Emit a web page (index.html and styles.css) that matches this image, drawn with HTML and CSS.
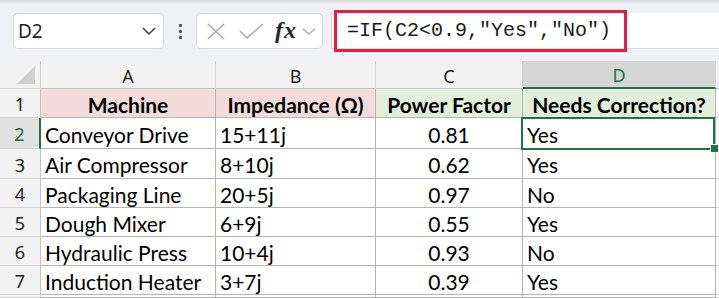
FILE: index.html
```html
<!DOCTYPE html>
<html lang="en">

<head>
     <meta charset="UTF-8">
     <meta name="viewport" content="width=device-width, initial-scale=1.0">
     <title>Power factor check</title>
     <link rel="stylesheet" href="styles.css">
</head>

<body>

     <div id="wrapper">
          <!-- Formula toolbar -->
          <div class="toolbar">
               <div class="name-box">
                    <span class="name-text">D2</span>
                    <svg class="chevron" width="14" height="8" viewBox="0 0 14 8">
                         <polyline points="1,1 7,7 13,1" fill="none" stroke="#333" stroke-width="1.4" />
                    </svg>
               </div>
               <div class="dots">
                    <span></span><span></span><span></span>
               </div>
               <div class="func-box">
                    <svg width="18" height="17" viewBox="0 0 18 17">
                         <line x1="1" y1="1" x2="17" y2="16" stroke="#a6a6a6" stroke-width="1.4" />
                         <line x1="17" y1="1" x2="1" y2="16" stroke="#a6a6a6" stroke-width="1.4" />
                    </svg>
                    <svg width="25" height="16" viewBox="0 0 25 16">
                         <polyline points="1,8 8,15 24,1" fill="none" stroke="#a6a6a6" stroke-width="1.4" />
                    </svg>
                    <span class="fx">fx</span>
                    <svg width="14" height="7" viewBox="0 0 14 7">
                         <polyline points="1,1 7,6 13,1" fill="none" stroke="#a6a6a6" stroke-width="1.3" />
                    </svg>
               </div>
               <div class="formula-bar">
                    <span class="formula-text">=IF(C2&lt;0.9,"Yes","No")</span>
                    <div class="highlight"></div>
               </div>
          </div>

          <!-- Sheet -->
          <div class="sheet">
               <div class="corner"><div class="corner-tri"></div></div>
               <div class="col-head">A</div>
               <div class="col-head">B</div>
               <div class="col-head">C</div>
               <div class="col-head col-active">D</div>
               <div class="col-head col-rest"></div>

               <div class="row-head">1</div>
               <div class="cell head pink">Machine</div>
               <div class="cell head pink">Impedance (Ω)</div>
               <div class="cell head green">Power Factor</div>
               <div class="cell head green">Needs Correction?</div>
               <div class="cell rest"></div>

               <div class="row-head row-active">2</div>
               <div class="cell">Conveyor Drive</div>
               <div class="cell">15+11j</div>
               <div class="cell num">0.81</div>
               <div class="cell selected">Yes</div>
               <div class="cell rest"></div>

               <div class="row-head">3</div>
               <div class="cell">Air Compressor</div>
               <div class="cell">8+10j</div>
               <div class="cell num">0.62</div>
               <div class="cell">Yes</div>
               <div class="cell rest"></div>

               <div class="row-head">4</div>
               <div class="cell">Packaging Line</div>
               <div class="cell">20+5j</div>
               <div class="cell num">0.97</div>
               <div class="cell">No</div>
               <div class="cell rest"></div>

               <div class="row-head">5</div>
               <div class="cell">Dough Mixer</div>
               <div class="cell">6+9j</div>
               <div class="cell num">0.55</div>
               <div class="cell">Yes</div>
               <div class="cell rest"></div>

               <div class="row-head">6</div>
               <div class="cell">Hydraulic Press</div>
               <div class="cell">10+4j</div>
               <div class="cell num">0.93</div>
               <div class="cell">No</div>
               <div class="cell rest"></div>

               <div class="row-head">7</div>
               <div class="cell">Induction Heater</div>
               <div class="cell">3+7j</div>
               <div class="cell num">0.39</div>
               <div class="cell">Yes</div>
               <div class="cell rest"></div>

               <div class="row-head row-last"></div>
               <div class="cell"></div>
               <div class="cell"></div>
               <div class="cell"></div>
               <div class="cell"></div>
               <div class="cell rest"></div>
          </div>
     </div>

</body>

</html>
```

FILE: styles.css
```css
* {
     padding: 0;
     margin: 0;
     box-sizing: border-box;
}

html,
body {
     width: 100%;
     height: 100%;
     overflow: hidden;
     background: #ffffff;
}

#wrapper {
     width: 719px;
     height: 298px;
     overflow: hidden;
}

/* ---------- toolbar ---------- */

.toolbar {
     height: 61px;
     display: flex;
     align-items: flex-start;
     padding: 13px 0 0 13px;
     background: linear-gradient(#d6d8db 0, #e6e8eb 3px, #eff1f4 4px);
     font-family: 'Noto Sans', 'Open Sans', sans-serif;
}

.name-box {
     width: 151px;
     height: 36px;
     display: flex;
     align-items: center;
     justify-content: space-between;
     padding: 0 7px 0 4px;
     background: #ffffff;
     border: 1px solid #d4d6d9;
     border-radius: 5px;
}

.name-text {
     font-size: 19px;
     color: #1f1f1f;
}

.dots {
     width: 32px;
     height: 36px;
     display: flex;
     flex-direction: column;
     align-items: center;
     justify-content: center;
     gap: 3px;
}

.dots span {
     width: 3px;
     height: 3px;
     background: #505050;
     border-radius: 1px;
}

.func-box {
     width: 127px;
     height: 36px;
     display: flex;
     align-items: center;
     padding-left: 10px;
     background: #ffffff;
     border: 1px solid #d4d6d9;
     border-radius: 5px;
}

.func-box svg:nth-child(2) {
     margin-left: 14px;
}

.fx {
     margin-left: 11px;
     font-family: 'Liberation Serif', serif;
     font-style: italic;
     font-weight: 700;
     font-size: 24px;
     letter-spacing: 1px;
     color: #262626;
     line-height: 1;
     margin-top: -2px;
}

.func-box svg:last-child {
     margin-left: 5px;
}

.formula-bar {
     position: relative;
     flex: 1;
     height: 36px;
     margin-left: 8px;
     display: flex;
     align-items: center;
     padding-left: 15px;
     background: #ffffff;
     border-left: 1px solid #d4d6d9;
     border-bottom: 1px solid #d4d6d9;
}

.formula-text {
     font-family: 'Liberation Mono', 'DejaVu Sans Mono', monospace;
     font-size: 20px;
     color: #1a1a1a;
}

.highlight {
     position: absolute;
     left: 2px;
     top: -3px;
     width: 293px;
     height: 42px;
     border: 3px solid #e11d48;
}

/* ---------- sheet ---------- */

.sheet {
     display: grid;
     grid-template-columns: 41px 175px 160px 147px 193px 1fr;
     grid-template-rows: 28px 29px 31px 30px 29px 29px 29px 29px 3px;
     height: 237px;
     overflow: hidden;
     font-family: 'Lato', 'Liberation Sans', sans-serif;
     font-size: 21px;
     color: #000000;
}

.corner {
     position: relative;
     background: #f3f3f3;
     border-right: 1px solid #d0d0d0;
     border-bottom: 1px solid #d0d0d0;
}

.corner-tri {
     position: absolute;
     right: 5px;
     bottom: 4px;
     width: 0;
     height: 0;
     border-left: 18px solid transparent;
     border-bottom: 18px solid #d0d0d0;
}

.col-head {
     display: flex;
     align-items: center;
     justify-content: center;
     padding-top: 2px;
     background: #f3f3f3;
     border-right: 1px solid #d4d4d4;
     border-bottom: 1px solid #c4c4c4;
     font-family: 'Noto Sans', 'Open Sans', sans-serif;
     font-size: 18px;
     color: #1f1f1f;
}

.col-active {
     background: #d6d6d6;
     color: #217346;
     border-bottom: 2px solid #217346;
}

.col-rest {
     border-right: none;
}

.row-head {
     display: flex;
     align-items: center;
     justify-content: center;
     padding-top: 2px;
     background: #f3f3f3;
     border-right: 1px solid #c4c4c4;
     border-bottom: 1px solid #d4d4d4;
     font-family: 'Noto Sans', 'Open Sans', sans-serif;
     font-size: 18px;
     color: #1f1f1f;
}

.row-active {
     background: #e1e1e1;
     color: #217346;
     border-right: 2px solid #217346;
}

.cell {
     display: flex;
     align-items: center;
     padding: 2px 0 0 4px;
     white-space: nowrap;
     border-right: 1px solid #b4b4b4;
     border-bottom: 1px solid #b4b4b4;
}

.cell.rest {
     border-right: none;
     border-bottom-color: #d4d4d4;
}

.head {
     justify-content: center;
     padding-left: 0;
     font-weight: 700;
}

.pink {
     background: #f2dcdb;
}

.green {
     background: #e2efda;
}

.num {
     justify-content: center;
     padding-left: 0;
}

.selected {
     position: relative;
}

.selected::after {
     content: "";
     position: absolute;
     left: -2px;
     top: -1px;
     right: 0;
     bottom: -2px;
     border: 2px solid #217346;
}

.selected::before {
     content: "";
     position: absolute;
     right: -4px;
     bottom: -5px;
     width: 7px;
     height: 7px;
     background: #217346;
     border: 1px solid #ffffff;
     z-index: 2;
}
```
